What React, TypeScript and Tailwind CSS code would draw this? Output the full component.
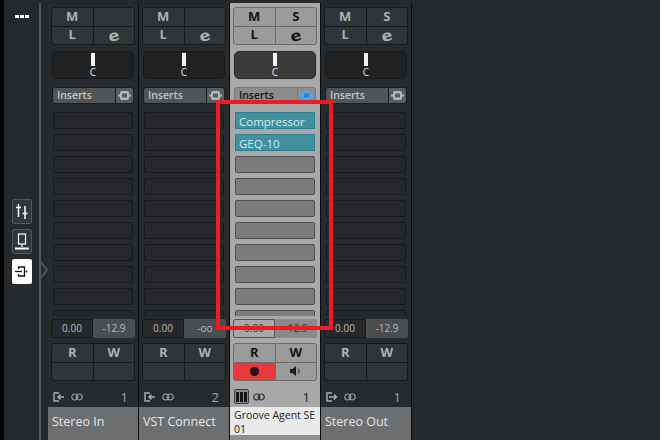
import React from 'react';

type Strip = {
  name: string;
  num: number;
  solo?: boolean;
  value: string;
  kind: 'in' | 'out' | 'midi';
  selected?: boolean;
  inserts?: string[];
};

const strips: Strip[] = [
  { name: 'Stereo In', num: 1, value: '-12.9', kind: 'in' },
  { name: 'VST Connect', num: 2, value: '-oo', kind: 'in' },
  { name: 'Groove Agent SE 01', num: 1, solo: true, value: '-12.9', kind: 'midi', selected: true, inserts: ['Compressor', 'GEQ-10'] },
  { name: 'Stereo Out', num: 1, solo: true, value: '-12.9', kind: 'out' },
];

const SLOTS = Array.from({ length: 10 }, (_, i) => i);

const RoutingIcon = ({ dir, color }: { dir: 'in' | 'out'; color: string }) => (
  <svg width="12" height="10" viewBox="0 0 12 10" fill="none" stroke={color} strokeWidth="1.4">
    <path d="M6 1H1v8h5" />
    {dir === 'in' ? <path d="M11 5H5M7.5 2.5 5 5l2.5 2.5" /> : <path d="M3 5h7M8 2.5 10.5 5 8 7.5" />}
  </svg>
);

const LinkIcon = ({ color }: { color: string }) => (
  <svg width="12" height="8" viewBox="0 0 12 8" fill="none" stroke={color} strokeWidth="1.2">
    <circle cx="3.8" cy="4" r="3" />
    <circle cx="8.2" cy="4" r="3" />
  </svg>
);

const BypassIcon = ({ color, inner }: { color: string; inner: string }) => (
  <svg width="13" height="9" viewBox="0 0 13 9">
    <rect x="2" y="0" width="9" height="9" rx="2" fill={color} />
    <rect x="4" y="2.5" width="5" height="4" fill={inner} />
    <rect x="0" y="3.5" width="2" height="2" fill={color} />
    <rect x="11" y="3.5" width="2" height="2" fill={color} />
  </svg>
);

const PianoIcon = () => (
  <span className="flex h-[15px] w-[15px] items-center justify-center rounded-[2px] border border-[#3c3c3c] bg-[#8b8b8b]">
    <svg width="11" height="10" viewBox="0 0 11 10" fill="#151515">
      <rect x="0" y="0" width="3" height="10" />
      <rect x="4" y="0" width="3" height="10" />
      <rect x="8" y="0" width="3" height="10" />
    </svg>
  </span>
);

const Channel = ({ strip }: { strip: Strip }) => {
  const sel = !!strip.selected;
  const cell = sel
    ? 'flex min-h-0 items-center justify-center bg-[#9b9b9b] leading-none pb-px text-[#141414]'
    : 'flex min-h-0 items-center justify-center bg-[#30353a] leading-none pb-px text-[#aeb0b1]';
  const box = sel ? 'bg-[#6b6b6b] border-[#6b6b6b]' : 'bg-[#16181a] border-[#16181a]';

  return (
    <div className={sel ? 'flex h-full w-[90px] flex-col bg-[#a8a8a8]' : 'flex h-full w-[90px] flex-col bg-[#272b2e]'}>
      <div className="flex flex-1 flex-col px-[3px]">
        {/* mute, solo, listen, edit */}
        <div className={`mt-[4px] grid h-[38px] w-[84px] grid-cols-2 grid-rows-2 gap-px overflow-hidden rounded-[3px] border text-[13px] font-bold ${box}`}>
          <div className={cell}>M</div>
          <div className={cell}>{strip.solo ? 'S' : ''}</div>
          <div className={cell}>L</div>
          <div className={`${cell} text-[15px]`}>
            <span className="-rotate-[18deg] scale-x-[1.25] leading-[14px]">e</span>
          </div>
        </div>

        {/* pan */}
        <div className={sel
          ? 'mx-px mt-[6px] flex h-[28px] flex-col items-center rounded-[5px] border border-[#2a2a2a] bg-[#3b3b3b] pt-[1px]'
          : 'mx-px mt-[6px] flex h-[28px] flex-col items-center rounded-[5px] border border-[#17191b] bg-[#1f2123] pt-[1px]'}>
          <div className="h-[13px] w-[4px] bg-[#f2f2f2]" />
          <div className="mt-[1px] text-[10px] font-medium leading-[10px] text-[#e4e4e4]">C</div>
        </div>

        {/* inserts header */}
        <div className={sel
          ? 'mx-px mt-[8px] flex h-[17px] overflow-hidden rounded-[3px] border border-[#777] bg-[#777]'
          : 'mx-px mt-[8px] flex h-[17px] overflow-hidden rounded-[3px] border border-[#1b1d1f] bg-[#1b1d1f]'}>
          <div className={sel
            ? 'flex flex-1 items-center bg-[#8d8d8d] pl-[4px] text-[10.5px] font-semibold text-[#141414]'
            : 'flex flex-1 items-center bg-[#525457] pl-[4px] text-[10.5px] font-semibold text-[#c4c5c6]'}>
            Inserts
          </div>
          <div className={sel
            ? 'ml-px flex w-[17px] items-center justify-center bg-[#8d8d8d]'
            : 'ml-px flex w-[17px] items-center justify-center bg-[#5a5c5f]'}>
            <BypassIcon color={sel ? '#4aa6ef' : '#b5b6b7'} inner={sel ? '#2f7fc8' : '#5a5c5f'} />
          </div>
        </div>

        {/* slots, the last one is cut off by the bottom of the rack */}
        <div className="mt-[8px] flex h-[204px] flex-col gap-[5px] overflow-hidden px-[2px]">
          {SLOTS.map((i) => {
            const insert = strip.inserts?.[i];
            if (insert) {
              return (
                <div key={i} className="flex h-[17px] shrink-0 items-center border border-[#2f7f93] bg-[#41919f] pl-[3px] pt-[2px] text-[11.5px] leading-none text-[#d8e9ee]">
                  {insert}
                </div>
              );
            }
            return (
              <div key={i} className={sel
                ? 'h-[17px] shrink-0 rounded-[2px] border border-[#4c4c4c] bg-[#7c7c7c]'
                : 'h-[17px] shrink-0 rounded-[2px] border border-[#17191b] bg-[#26282b]'} />
            );
          })}
        </div>

        {/* gain, peak */}
        <div className={`mt-[3px] flex h-[19px] w-[84px] overflow-hidden rounded-[2px] text-[10px] ${sel ? 'text-[#333]' : 'text-[#b9bbbc]'}`}>
          <div className={sel
            ? 'flex w-[42px] items-center justify-center rounded-l-[2px] border border-[#555] bg-[#a8a8a8]'
            : 'flex w-[42px] items-center justify-center rounded-l-[2px] border border-[#17191b] bg-[#26292c]'}>
            0.00
          </div>
          <div className={sel
            ? 'flex flex-1 items-center justify-center bg-[#8a8a8a]'
            : 'flex flex-1 items-center justify-center bg-[#4a4e50]'}>
            {strip.value}
          </div>
        </div>

        {/* read, write */}
        <div className={`mt-[5px] grid h-[38px] w-[84px] grid-cols-2 grid-rows-2 gap-px overflow-hidden rounded-[3px] border text-[13px] font-bold ${box}`}>
          <div className={cell}>R</div>
          <div className={cell}>W</div>
          <div className={sel ? 'flex items-center justify-center bg-[#e83a3d]' : cell}>
            {sel && <span className="h-[9px] w-[9px] rounded-full bg-[#2a1010]" />}
          </div>
          <div className={cell}>
            {sel && (
              <svg width="12" height="10" viewBox="0 0 12 10" fill="#1c1c1c">
                <path d="M0 3h2.5L6 0v10L2.5 7H0z" />
                <path d="M8 2.5c1.6 1.4 1.6 3.6 0 5" fill="none" stroke="#1c1c1c" strokeWidth="1" />
              </svg>
            )}
          </div>
        </div>

        {/* routing row */}
        <div className="mt-[8px] flex h-[15px] items-center">
          <span className="flex w-[16px] items-center justify-center">
            {strip.kind === 'midi' ? <PianoIcon /> : <RoutingIcon dir={strip.kind} color="#aeb0b1" />}
          </span>
          <span className="ml-[4px] flex items-center">
            <LinkIcon color={sel ? '#333' : '#9a9c9e'} />
          </span>
          <span className={`ml-auto pr-[7px] text-[13px] leading-[14px] ${sel ? 'text-[#222]' : 'text-[#a5a7a8]'}`}>{strip.num}</span>
        </div>
      </div>

      {/* name */}
      <div className={sel ? 'mt-[3px] h-[33px] bg-[#8f8f8f]' : 'mt-[3px] h-[33px] bg-[#6c6e70]'}>
        <div className={sel
          ? 'h-[28px] bg-[#e9e9e9] pl-[4px] pt-[1px] text-[10.5px] leading-[14px] text-[#222]'
          : 'pl-[4px] pt-[7px] text-[12.5px] leading-[16px] text-[#e6e6e6]'}>
          {strip.name}
        </div>
      </div>
    </div>
  );
};

const SideButton = ({ active, children }: { active?: boolean; children: React.ReactNode }) => (
  <div className={active
    ? 'flex h-[25px] w-[20px] items-center justify-center rounded-[2px] bg-white'
    : 'flex h-[25px] w-[20px] items-center justify-center rounded-[2px] border border-[#55585b] bg-[#33373a]'}>
    {children}
  </div>
);

export default function App() {
  return (
    <div className="relative flex h-[440px] w-[660px] overflow-hidden bg-[#25292c] font-['Open_Sans',sans-serif]">
      <div className="h-full w-[4px] bg-black" />

      {/* side rail */}
      <div className="flex h-full w-[35px] flex-col items-center pl-[1px]">
        <div className="mt-[15px] flex gap-px">
          <span className="h-[3px] w-[4px] bg-white" />
          <span className="h-[3px] w-[4px] bg-white" />
          <span className="h-[3px] w-[4px] bg-white" />
        </div>
        <div className="mt-[181px] flex flex-col gap-[5px]">
          <SideButton>
            <svg width="14" height="15" viewBox="0 0 14 15" fill="none" stroke="white" strokeWidth="1.5">
              <path d="M3.5 0v13M10 2v13M1 3.5h5M7.5 9.5h5" />
            </svg>
          </SideButton>
          <SideButton>
            <svg width="14" height="18" viewBox="0 0 14 18" fill="none" stroke="white" strokeWidth="1.2">
              <rect x="3.5" y="1" width="7" height="10" />
              <path d="M7 11v3" />
              <path d="M0 15.5h14" strokeWidth="2" />
            </svg>
          </SideButton>
          <SideButton active>
            <svg width="14" height="11" viewBox="0 0 14 11" fill="none" stroke="#111" strokeWidth="1.3">
              <path d="M3.5 3V1h6v9h-6V8" />
              <path d="M0 5.5h7" />
              <path d="M11.5 4.7v1.6" strokeWidth="1.6" />
            </svg>
          </SideButton>
        </div>
      </div>

      {/* rail edge with the collapse chevron */}
      <div className="mt-[3px] flex w-[2px] bg-[#55585b]" />
      <div className="flex w-[7px] flex-col">
        <svg className="mt-[260px]" width="7" height="20" viewBox="0 0 7 20" fill="none" stroke="#55585b" strokeWidth="2">
          <path d="M0 2l6 8-6 8" />
        </svg>
      </div>

      {/* mixer strips */}
      <div className="mt-[3px] flex h-[437px]">
        {strips.map((strip) => (
          <React.Fragment key={strip.name}>
            <Channel strip={strip} />
            <div className="h-full w-px bg-[#0c0d0e]" />
          </React.Fragment>
        ))}
      </div>

      {/* annotation */}
      <div className="pointer-events-none absolute left-[216px] top-[100px] h-[230px] w-[117px] border-4 border-[#ec1c24]" />
    </div>
  );
}
